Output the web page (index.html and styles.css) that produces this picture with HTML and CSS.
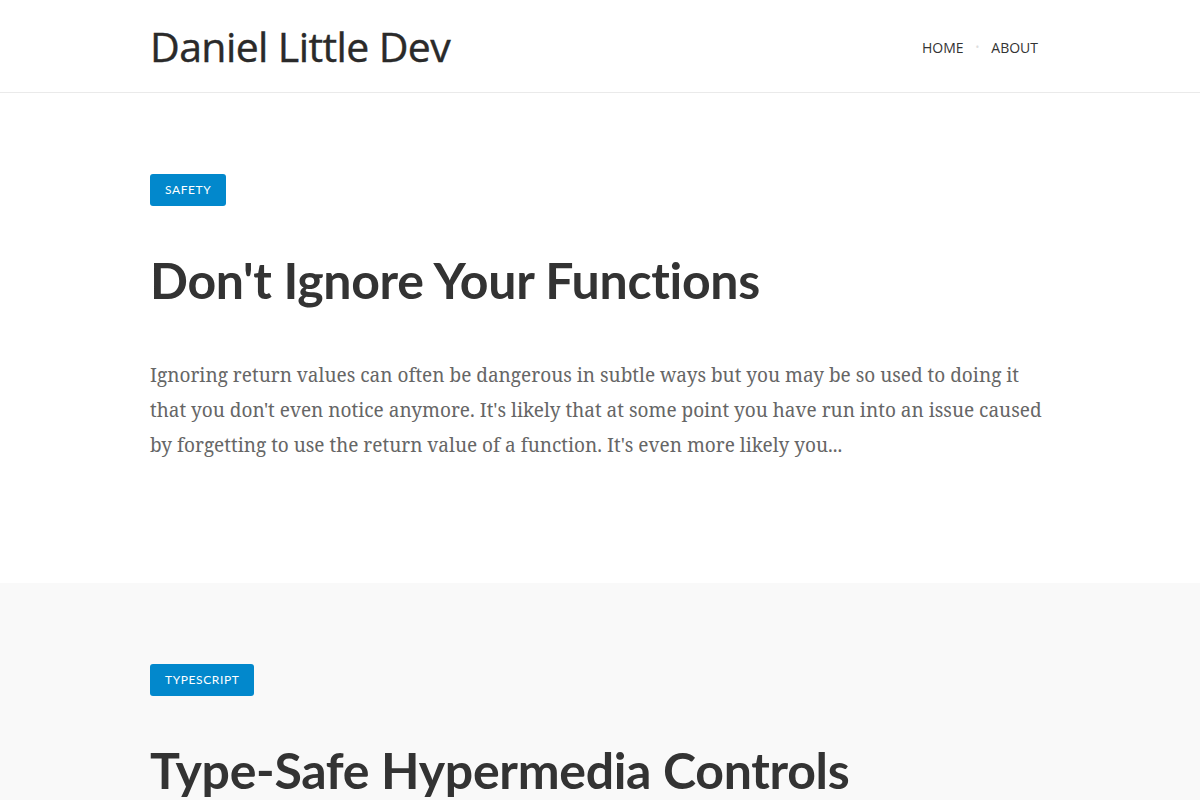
FILE: index.html
```html
<!DOCTYPE html>
<html lang="en">
<head>
    <meta charset="UTF-8">
    <meta name="viewport" content="width=device-width, initial-scale=1.0">
    <title>Daniel Little Dev</title>
    <link rel="stylesheet" href="styles.css">
</head>
<body>
    <!-- Site header -->
    <header class="site-header">
        <div class="wrap header-inner">
            <a href="#" class="site-title">Daniel Little Dev</a>
            <nav class="site-nav">
                <a href="#">HOME</a>
                <span class="nav-dot">&bull;</span>
                <a href="#">ABOUT</a>
            </nav>
        </div>
    </header>

    <!-- Post list -->
    <main>
        <article class="post">
            <div class="wrap">
                <a href="#" class="tag">SAFETY</a>
                <h2 class="post-title"><a href="#">Don't Ignore Your Functions</a></h2>
                <p class="excerpt">Ignoring return values can often be dangerous in subtle ways but you may be so used to doing it that you don't even notice anymore. It's likely that at some point you have run into an issue caused by forgetting to use the return value of a function. It's even more likely you...</p>
            </div>
        </article>

        <article class="post post-alt">
            <div class="wrap">
                <a href="#" class="tag">TYPESCRIPT</a>
                <h2 class="post-title"><a href="#">Type-Safe Hypermedia Controls</a></h2>
                <p class="excerpt">Hypermedia controls let a server tell its clients what they can do next, without the client having to hard-code every route and rule.</p>
            </div>
        </article>
    </main>
</body>
</html>
```

FILE: styles.css
```css
/* Base */
body {
    margin: 0;
    background: #fff;
    color: #333;
    font-family: 'Open Sans', sans-serif;
}

a {
    color: inherit;
    text-decoration: none;
}

.wrap {
    width: 900px;
    margin: 0 auto;
}

/* Header */
.site-header {
    border-bottom: 1px solid #eaeaea;
}

.header-inner {
    display: flex;
    justify-content: space-between;
    align-items: center;
    height: 92px;
}

.site-title {
    font-size: 41px;
    font-weight: 500;
    letter-spacing: -0.6px;
    color: #2a2a2a;
    -webkit-text-stroke: 0.4px #2a2a2a;
}

.site-nav {
    display: flex;
    align-items: center;
    gap: 12px;
    font-size: 14px;
    color: #333;
    margin-right: 12px;
    padding-top: 2px;
}

.nav-dot {
    color: #ddd;
    font-size: 10px;
}

/* Posts */
.post {
    padding: 81px 0 120px;
}

.post-alt {
    background: #f9f9f9;
}

.tag {
    display: inline-block;
    background: #0288cc;
    color: #fff;
    font-family: 'Lato', sans-serif;
    font-size: 12px;
    font-weight: 400;
    letter-spacing: 0.6px;
    line-height: 32px;
    padding: 0 15px;
    border-radius: 3px;
}

.post-title {
    margin: 44px 0 48px;
    font-family: 'Lato', sans-serif;
    font-size: 50px;
    font-weight: 700;
    line-height: 1.2;
    letter-spacing: -0.3px;
    color: #333;
}

.excerpt {
    margin: 0;
    font-family: 'Noto Serif', 'DejaVu Serif Condensed', serif;
    font-size: 19px;
    line-height: 35px;
    color: #666;
}
```
